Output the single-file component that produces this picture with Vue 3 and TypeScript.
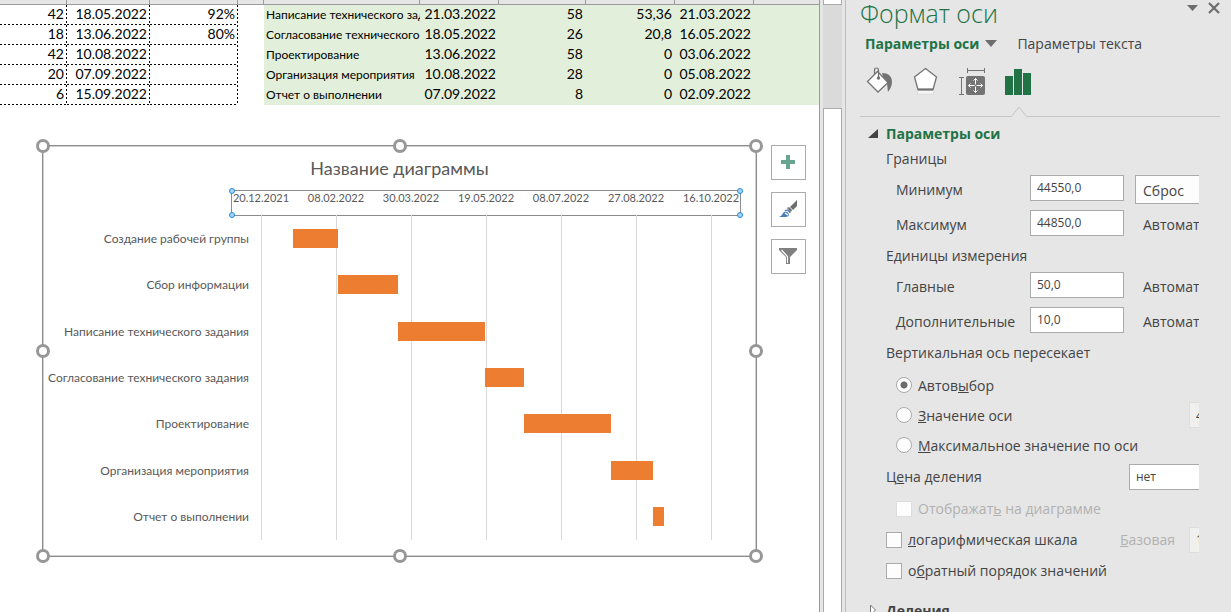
<script setup lang="ts">
import { ref } from 'vue'

interface SheetRow {
  days: string
  end: string
  percent: string
  task: string
  start: string
  length: string
  done: string
  until: string
}

interface Task {
  name: string
  start: number
  length: number
}

const rows: SheetRow[] = [
  { days: '42', end: '18.05.2022', percent: '92%', task: 'Написание технического задания', start: '21.03.2022', length: '58', done: '53,36', until: '21.03.2022' },
  { days: '18', end: '13.06.2022', percent: '80%', task: 'Согласование технического задания', start: '18.05.2022', length: '26', done: '20,8', until: '16.05.2022' },
  { days: '42', end: '10.08.2022', percent: '', task: 'Проектирование', start: '13.06.2022', length: '58', done: '0', until: '03.06.2022' },
  { days: '20', end: '07.09.2022', percent: '', task: 'Организация мероприятия', start: '10.08.2022', length: '28', done: '0', until: '05.08.2022' },
  { days: '6', end: '15.09.2022', percent: '', task: 'Отчет о выполнении', start: '07.09.2022', length: '8', done: '0', until: '02.09.2022' },
]

const axisMin = 44550
const axisMax = 44850
const ticks = ['20.12.2021', '08.02.2022', '30.03.2022', '19.05.2022', '08.07.2022', '27.08.2022', '16.10.2022']

const tasks: Task[] = [
  { name: 'Создание рабочей группы', start: 44571, length: 30 },
  { name: 'Сбор информации', start: 44601, length: 40 },
  { name: 'Написание технического задания', start: 44641, length: 58 },
  { name: 'Согласование технического задания', start: 44699, length: 26 },
  { name: 'Проектирование', start: 44725, length: 58 },
  { name: 'Организация мероприятия', start: 44783, length: 28 },
  { name: 'Отчет о выполнении', start: 44811, length: 8 },
]

const share = (value: number): string => `${(value / (axisMax - axisMin)) * 100}%`
const tickLeft = (index: number): string => `${(index / (ticks.length - 1)) * 100}%`

const handles = ['nw', 'n', 'ne', 'w', 'e', 'sw', 's', 'se']
const corners = ['nw', 'ne', 'sw', 'se']

const minimum = ref('44550,0')
const maximum = ref('44850,0')
const major = ref('50,0')
const minor = ref('10,0')
const crossing = ref('auto')
const crossingValue = ref('44550,0')
const units = ref('нет')
const showUnits = ref(false)
const logScale = ref(false)
const logBase = ref('10')
const reverse = ref(false)
</script>

<template>
  <div class="app">
    <main class="sheet">
      <table class="cells">
        <colgroup>
          <col class="c-days" /><col class="c-end" /><col class="c-percent" /><col class="c-gap" />
          <col class="c-task" /><col class="c-start" /><col class="c-length" /><col class="c-done" />
          <col class="c-until" /><col />
        </colgroup>
        <thead>
          <tr><th v-for="n in 10" :key="n" scope="col"></th></tr>
        </thead>
        <tbody>
          <tr v-for="row in rows" :key="row.end">
            <td class="dash num">{{ row.days }}</td>
            <td class="dash num">{{ row.end }}</td>
            <td class="dash num">{{ row.percent }}</td>
            <td></td>
            <td class="green task">{{ row.task }}</td>
            <td class="green num">{{ row.start }}</td>
            <td class="green num">{{ row.length }}</td>
            <td class="green num">{{ row.done }}</td>
            <td class="green num">{{ row.until }}</td>
            <td class="green"></td>
          </tr>
        </tbody>
      </table>

      <div class="object">
        <section class="chart">
          <h2 class="chart-title">Название диаграммы</h2>
          <div class="plot-grid">
            <div class="axis">
              <span v-for="(tick, i) in ticks" :key="tick" class="tick" :style="{ left: tickLeft(i) }">{{ tick }}</span>
              <div class="axis-frame">
                <i v-for="c in corners" :key="c" class="dot" :class="c"></i>
              </div>
            </div>
            <div class="names">
              <span v-for="task in tasks" :key="task.name">{{ task.name }}</span>
            </div>
            <div class="plot">
              <i v-for="(tick, i) in ticks" :key="tick" class="line" :style="{ left: tickLeft(i) }"></i>
              <div v-for="task in tasks" :key="task.name" class="lane">
                <div class="bar" :style="{ marginLeft: share(task.start - axisMin), width: share(task.length) }"></div>
              </div>
            </div>
          </div>
          <i v-for="h in handles" :key="h" class="handle" :class="h"></i>
        </section>

        <div class="tools">
          <button type="button" aria-label="Элементы диаграммы">
            <svg width="33" height="33" viewBox="0 0 33 33"><path d="M14 9h4v5h5v4h-5v5h-4v-5H9v-4h5z" fill="#68a591" /></svg>
          </button>
          <button type="button" aria-label="Стили диаграммы">
            <svg width="33" height="33" viewBox="0 0 33 33">
              <path d="M25 7v6l-4 4-3-3z" fill="#6d6d6d" />
              <path d="M17 14l3 3-1 2-4-4z" fill="#6d6d6d" />
              <path d="M7 24c3-1 3-3 5-5 2-1 5 0 5 3-1 2-3 2-5 2z" fill="#4a7ebb" />
              <path d="M13 18c2-2 5 0 5 2" fill="none" stroke="#4a7ebb" stroke-width="1.4" />
              <path d="M13 20l3 2" stroke="#ffffff" stroke-width="1.5" />
            </svg>
          </button>
          <button type="button" aria-label="Фильтры диаграммы">
            <svg width="33" height="33" viewBox="0 0 33 33">
              <path d="M7 8h18v2l-7 7v7h-4v-7l-7-7z" fill="#7f7f7f" />
              <path d="M9.500 10l6 6.500V23" fill="none" stroke="#ffffff" stroke-width="1.200" />
            </svg>
          </button>
        </div>
      </div>
    </main>

    <div class="scroll">
      <div class="scroll-up"></div>
      <div class="scroll-track"></div>
      <div class="scroll-thumb"></div>
    </div>

    <aside class="pane">
      <header class="pane-head">
        <h1>Формат оси</h1>
        <button type="button" class="plain" aria-label="Параметры области задач">
          <svg width="11" height="6" viewBox="0 0 11 6"><path d="M0 0h11l-5.500 6z" fill="#6d6d6d" /></svg>
        </button>
        <button type="button" class="plain" aria-label="Закрыть">
          <svg width="12" height="12" viewBox="0 0 12 12"><path d="M1 1l10 10M11 1L1 11" stroke="#6d6d6d" stroke-width="2.200" /></svg>
        </button>
      </header>

      <nav class="tabs">
        <button type="button" class="tab active">
          Параметры оси
          <svg width="12" height="7" viewBox="0 0 12 7"><path d="M0 0h12l-6 7z" fill="#6d6d6d" /></svg>
        </button>
        <button type="button" class="tab">Параметры текста</button>
      </nav>

      <div class="kinds">
        <button type="button" aria-label="Заливка и границы">
          <svg width="28" height="28" viewBox="0 0 28 28">
            <path d="M16 6c6 0 10 3 10 9 0 4-2 7-4 10-1-6 0-11-5-15z" fill="#737373" />
            <path d="M11.500 4.500l10.500 11-10 9.500-10.500-10.500z" fill="#ffffff" stroke="#737373" stroke-width="1.300" />
            <path d="M8.500 8V3q0-2 2-2t2 2v7" fill="none" stroke="#737373" stroke-width="1.200" />
            <circle cx="12.500" cy="11" r="1.700" fill="#737373" />
          </svg>
        </button>
        <button type="button" aria-label="Эффекты">
          <svg width="28" height="28" viewBox="0 0 28 28">
            <defs>
              <linearGradient id="reflection" x1="0" y1="0" x2="0" y2="1">
                <stop offset="0" stop-color="#ffffff" />
                <stop offset="1" stop-color="#e6e6e6" />
              </linearGradient>
            </defs>
            <path d="M6 23h15l1 5H5z" fill="url(#reflection)" stroke="#d0d0d0" stroke-width=".6" />
            <path d="M13.500 1.500l11 8.500-3.500 12.500H6L2.500 10z" fill="#ffffff" stroke="#737373" stroke-width="1.300" />
            <path d="M6 22.500h15" stroke="#737373" stroke-width="2" />
          </svg>
        </button>
        <button type="button" aria-label="Размер и свойства">
          <svg width="28" height="28" viewBox="0 0 28 28">
            <rect x="8" y="9" width="19" height="19" rx="2" fill="#737373" />
            <path d="M9.500 1v5M26.500 1v5M9.500 3.500h17M1 10.500h5M1 27.500h5M3.500 10.500v17" stroke="#737373" stroke-width="1" fill="none" />
            <path d="M17.500 11.500v14M10.500 18.500h14M15.500 13.500l2-2 2 2M15.500 23.500l2 2 2-2M12.500 16.500l-2 2 2 2M22.500 16.500l2 2-2 2" stroke="#ffffff" stroke-width="1" fill="none" />
            <rect x="16.500" y="17.500" width="2" height="2" fill="#737373" />
          </svg>
        </button>
        <button type="button" aria-label="Параметры оси">
          <svg width="28" height="28" viewBox="0 0 28 28"><path d="M1 9h8v19H1zM10 2h8v26h-8zM19 6h8v22h-8z" fill="#217346" /></svg>
        </button>
      </div>

      <svg class="divider-notch" viewBox="0 0 360 11" preserveAspectRatio="xMinYMin slice" aria-hidden="true">
        <path d="M0 10.500h151.500l7.500-9.500 7.500 9.500H360" fill="none" stroke="#c6c6c6" stroke-width="1" />
      </svg>

      <form class="body" @submit.prevent>
        <button type="button" class="section-head open">
          <svg width="10" height="10" viewBox="0 0 10 10"><path d="M10 0v9H0z" fill="#444444" /></svg>
          Параметры оси
        </button>

        <fieldset class="bounds">
          <legend>Границы</legend>
          <div class="field">
            <label for="min">Минимум</label>
            <input id="min" v-model="minimum" type="text" />
            <button type="button" class="reset">Сброс</button>
          </div>
          <div class="field">
            <label for="max">Максимум</label>
            <input id="max" v-model="maximum" type="text" />
            <span class="auto">Автоматически</span>
          </div>
        </fieldset>

        <fieldset>
          <legend>Единицы измерения</legend>
          <div class="field">
            <label for="major">Главные</label>
            <input id="major" v-model="major" type="text" />
            <span class="auto">Автоматически</span>
          </div>
          <div class="field">
            <label for="minor">Дополнительные</label>
            <input id="minor" v-model="minor" type="text" />
            <span class="auto">Автоматически</span>
          </div>
        </fieldset>

        <fieldset class="crossing">
          <legend>Вертикальная ось пересекает</legend>
          <label class="choice"><input v-model="crossing" type="radio" name="crossing" value="auto" /><span>Автов<u>ы</u>бор</span></label>
          <div class="pair">
            <label class="choice"><input v-model="crossing" type="radio" name="crossing" value="value" /><span><u>З</u>начение оси</span></label>
            <input v-model="crossingValue" class="cut" type="text" aria-label="Значение оси" disabled />
          </div>
          <label class="choice"><input v-model="crossing" type="radio" name="crossing" value="max" /><span><u>М</u>аксимальное значение по оси</span></label>
        </fieldset>

        <div class="units">
          <label for="units">Ц<u>е</u>на деления</label>
          <select id="units" v-model="units"><option>нет</option></select>
        </div>
        <label class="check inset"><input v-model="showUnits" type="checkbox" disabled /><span>Отображат<u>ь</u> на диаграмме</span></label>
        <div class="pair">
          <label class="check"><input v-model="logScale" type="checkbox" /><span><u>л</u>огарифмическая шкала</span></label>
          <label class="base" for="base"><u>Б</u>азовая</label>
          <input id="base" v-model="logBase" class="cut" type="text" disabled />
        </div>
        <label class="check"><input v-model="reverse" type="checkbox" /><span>о<u>б</u>ратный порядок значений</span></label>

        <button type="button" class="section-head closed">
          <svg width="10" height="12" viewBox="0 0 10 12"><path d="M2.500 1v10l5-5z" fill="#ffffff" stroke="#777777" /></svg>
          Деления
        </button>
      </form>
    </aside>
  </div>
</template>

<style>
body {
  margin: 0;
  background: #e6e6e6;
}
</style>

<style scoped>
.app {
  display: flex;
  height: 100vh;
  overflow: hidden;
  background: #e6e6e6;
  color: #444444;
  font-family: "Open Sans", "Noto Sans", sans-serif;
  font-size: 14px;
}
.app *,
.app *::before {
  box-sizing: border-box;
}
button,
input,
select {
  font: inherit;
  color: inherit;
}
button {
  padding: 0;
  border: 0;
  background: none;
}
svg {
  display: block;
}

/* worksheet */
.sheet {
  flex: 1;
  min-width: 0;
  border-right: 1px solid #9b9b9b;
  background: #ffffff;
  font-family: Lato, Carlito, "Open Sans", sans-serif;
}
.cells {
  width: 100%;
  table-layout: fixed;
  border-collapse: separate;
  border-spacing: 0;
  color: #000000;
}
.c-days { width: 67px; }
.c-end { width: 83px; }
.c-percent { width: 88px; }
.c-gap { width: 26px; }
.c-task { width: 156px; }
.c-start { width: 79px; }
.c-length { width: 87px; }
.c-done { width: 89px; }
.c-until { width: 79px; }
.cells th {
  height: 5px;
  padding: 0;
  border-right: 1px solid #9b9b9b;
  border-bottom: 1px solid #9b9b9b;
  background: #e6e6e6;
}
.cells th:last-child {
  border-right: 0;
}
.cells td {
  height: 20px;
  padding: 0 3px 2px 2px;
  overflow: hidden;
  line-height: 18px;
  white-space: nowrap;
}
.cells .dash {
  background:
    repeating-linear-gradient(90deg, #000000 0 2px, transparent 2px 4px) left bottom / 100% 1px no-repeat,
    repeating-linear-gradient(180deg, #000000 0 2px, transparent 2px 4px) right top / 1px 100% no-repeat;
}
.cells .num {
  text-align: right;
}
.cells .green {
  background: #e2efda;
}
.cells .task {
  padding: 0 0 0 2px;
  font-size: 12px;
}

/* chart object */
.object {
  display: flex;
  gap: 14px;
  margin: 40px 13px 0 42px;
}
.chart {
  position: relative;
  flex: 1;
  height: 412px;
  border: 1px solid #8c8c8c;
  box-shadow: inset 0 0 0 1px #d0d0d0;
  background: #ffffff;
  color: #595959;
}
.chart-title {
  margin: 0;
  padding-top: 7px;
  height: 44px;
  font-size: 18px;
  font-weight: 400;
  line-height: 30px;
  text-align: center;
}
.plot-grid {
  display: grid;
  grid-template-columns: 206px 1fr;
  grid-template-rows: 25px 325px;
  column-gap: 12px;
  padding-right: 45px;
}
.axis {
  position: relative;
  grid-column: 2;
  font-size: 11px;
}
.tick {
  position: absolute;
  top: 0;
  line-height: 15px;
  transform: translateX(-50%);
}
.axis-frame {
  position: absolute;
  inset: 0 -30px -1px;
  border: 1px solid #8c8c8c;
}
.dot {
  position: absolute;
  width: 6px;
  height: 6px;
  border: 1px solid #1e8be0;
  border-radius: 50%;
  background: #a9d4f5;
}
.dot.nw, .dot.ne { top: -3px; }
.dot.sw, .dot.se { bottom: -3px; }
.dot.nw, .dot.sw { left: -3px; }
.dot.ne, .dot.se { right: -3px; }
.names {
  display: grid;
  grid-auto-rows: 1fr;
  align-items: center;
  font-size: 12px;
  text-align: right;
  white-space: nowrap;
}
.plot {
  position: relative;
  display: grid;
  grid-auto-rows: 1fr;
  align-items: center;
}
.line {
  position: absolute;
  top: 0;
  bottom: 0;
  width: 1px;
  background: #d9d9d9;
}
.bar {
  position: relative;
  height: 19px;
  background: #ed7d31;
}
.handle {
  position: absolute;
  width: 14px;
  height: 14px;
  border: 3px solid #979797;
  border-radius: 50%;
  background: #ffffff;
}
.handle.nw, .handle.n, .handle.ne { top: -7px; }
.handle.w, .handle.e { top: calc(50% - 7px); }
.handle.sw, .handle.s, .handle.se { bottom: -7px; }
.handle.nw, .handle.w, .handle.sw { left: -7px; }
.handle.n, .handle.s { left: calc(50% - 7px); }
.handle.ne, .handle.e, .handle.se { right: -7px; }
.tools {
  display: flex;
  flex-direction: column;
  gap: 12px;
}
.tools button {
  width: 35px;
  height: 35px;
  border: 1px solid #ababab;
  background: #ffffff;
}

/* vertical scroll bar */
.scroll {
  display: flex;
  flex-direction: column;
  width: 25px;
  padding: 0 3px;
}
.scroll-up {
  height: 5px;
  border: 1px solid #ababab;
  border-top: 0;
  background: #ffffff;
}
.scroll-track {
  height: 103px;
  background: #dadada;
}
.scroll-thumb {
  flex: 1;
  border: 1px solid #ababab;
  border-bottom: 0;
  background: #ffffff;
}

/* format pane */
.pane {
  display: flex;
  flex-direction: column;
  flex: 0 0 386px;
  width: 386px;
  padding: 0 11px 0 14px;
  border-left: 1px solid #bdbdbd;
}
.pane-head {
  display: flex;
  align-items: flex-start;
  gap: 10px;
  height: 29px;
}
.pane-head h1 {
  flex: 1;
  margin: 0;
  color: #217346;
  font-size: 25px;
  font-weight: 300;
  line-height: 26px;
}
.plain {
  padding-top: 2px;
}
.plain:first-of-type {
  padding-top: 5px;
}
.tabs {
  display: flex;
  gap: 20px;
  height: 28px;
  padding-left: 5px;
}
.tab {
  display: flex;
  align-items: center;
  gap: 6px;
  white-space: nowrap;
}
.tab.active {
  color: #217346;
  font-weight: 700;
}
.kinds {
  display: flex;
  gap: 18px;
  height: 49px;
  padding: 10px 0 0 6px;
}
.kinds button {
  width: 28px;
  height: 28px;
}
.divider-notch {
  width: 100%;
  height: 11px;
}
.body {
  display: flex;
  flex-direction: column;
  align-items: stretch;
  flex: 1;
  min-height: 0;
  margin-right: 21px;
  padding-left: 26px;
  overflow: hidden;
}
.body > * {
  flex-shrink: 0;
}
.section-head {
  display: flex;
  align-items: center;
  gap: 8px;
  height: 28px;
  margin-left: -18px;
  padding-top: 4px;
  font-weight: 700;
}
.section-head.open {
  height: 29px;
  color: #217346;
}
.section-head.closed {
  margin-top: 8px;
}
fieldset {
  min-width: 0;
  margin: 0;
  padding: 0;
  border: 0;
}
legend {
  padding: 0;
  line-height: 27px;
}
.bounds legend {
  line-height: 26px;
}
.field {
  display: grid;
  grid-template-columns: 134px 94px 80px;
  align-items: start;
  height: 35px;
  padding: 3px 0 0 10px;
  line-height: 30px;
}
.field input,
.units select,
.cut {
  height: 26px;
  padding: 0 6px;
  border: 1px solid #ababab;
  border-radius: 0;
  background: #ffffff;
  font-size: 12px;
}
.field input {
  width: 94px;
}
.reset {
  height: 29px;
  margin-left: 11px;
  padding-left: 7px;
  border: 1px solid #ababab;
  background: #fdfdfd;
  text-align: left;
}
.auto {
  margin-left: 19px;
}
.crossing legend {
  margin-bottom: 4px;
}
.choice,
.check {
  display: flex;
  align-items: center;
  white-space: nowrap;
}
.choice {
  gap: 6px;
  height: 30px;
  padding-left: 10px;
}
.check {
  gap: 6px;
  height: 31px;
}
.check.inset {
  padding-left: 10px;
  color: #b1b1b1;
}
.choice input,
.check input {
  appearance: none;
  flex: none;
  width: 16px;
  height: 16px;
  margin: 0;
  border: 1px solid #ababab;
  background: #fdfdfd;
}
.choice input {
  border-radius: 50%;
}
.choice input:checked {
  background: radial-gradient(circle, #6d6d6d 3px, #fdfdfd 4px);
}
.check input:disabled {
  border-color: #dddddd;
}
.pair {
  display: flex;
  align-items: center;
}
.pair > :first-child {
  flex: 1;
}
.cut {
  flex: none;
  width: 60px;
  margin-right: -50px;
  border-color: #dddddd;
  background: #f0f0ef;
}
.base {
  margin-right: 14px;
  color: #b1b1b1;
}
.units {
  display: flex;
  align-items: center;
  justify-content: space-between;
  height: 33px;
}
.units select {
  appearance: none;
  width: 100px;
  margin-right: -30px;
}
</style>
